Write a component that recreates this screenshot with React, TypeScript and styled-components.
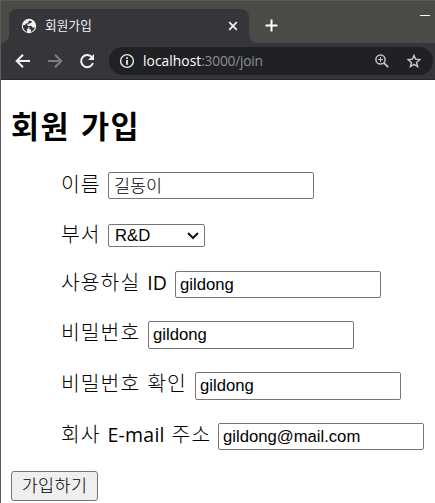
import React from 'react';
import styled, { createGlobalStyle } from 'styled-components';

const GlobalStyle = createGlobalStyle`
  * { box-sizing: border-box; }
  html, body { margin: 0; padding: 0; overflow: hidden; background: #fff; }
`;

const korean = '"Noto Sans CJK KR", sans-serif';

const Window = styled.div`
  width: 435px;
  height: 503px;
  border-left: 1px solid #5b5b5b;
  background: #fff;
  overflow: hidden;
`;

const TitleBar = styled.header`
  display: flex;
  height: 43px;
  border-top: 1px solid #5b5a58;
  background: #4b4a47;
`;

const TabShoulder = styled.div<{ $side: 'left' | 'right' }>`
  flex: none;
  align-self: flex-end;
  width: 8px;
  height: 8px;
  background: radial-gradient(circle at ${p => (p.$side === 'left' ? '0 0' : '100% 0')}, transparent 7.5px, #35363a 8px);
`;

const Tab = styled.div`
  display: flex;
  align-items: center;
  width: 240px;
  height: 34px;
  margin-top: 8px;
  padding: 0 11px 0 12px;
  border-radius: 8px 8px 0 0;
  background: #35363a;
`;

const TabTitle = styled.span`
  flex: 1;
  margin: -2px 0 0 8px;
  color: #f1f3f4;
  font: 12.6px/18px ${korean};
  letter-spacing: 0.2px;
  white-space: nowrap;
`;

const NewTab = styled.div`
  display: flex;
  padding: 18px 0 0 8px;
`;

const Minimize = styled.div`
  width: 10px;
  height: 1px;
  margin: 14px 5px 0 auto;
  background: #fff;
`;

const Toolbar = styled.nav`
  display: flex;
  align-items: center;
  height: 37px;
  padding: 0 2px 1px 14px;
  border-bottom: 1px solid #27282b;
  background: #35363a;
`;

const NavIcons = styled.div`
  display: flex;
  gap: 16px;
  width: 94px;
`;

const AddressBar = styled.div`
  display: flex;
  align-items: center;
  flex: 1;
  height: 28px;
  padding: 0 12px 0 10px;
  border-radius: 14px;
  background: #202124;
`;

const Url = styled.span`
  flex: 1;
  margin-left: 8px;
  color: #8b8e92;
  font: 13.8px/20px "Open Sans", sans-serif;
  letter-spacing: -0.25px;
  white-space: nowrap;
`;

const Host = styled.span`
  color: #fff;
  letter-spacing: 0.05px;
`;

const AddressActions = styled.div`
  display: flex;
  gap: 18px;
`;

const Page = styled.form`
  padding: 29px 0 0 10px;
`;

const Heading = styled.h1`
  margin: 0;
  height: 33px;
  color: #000;
  font: 700 30.5px/33px ${korean};
  letter-spacing: 1.5px;
  word-spacing: 2.5px;
  white-space: nowrap;
`;

const Fields = styled.div`
  display: flex;
  flex-direction: column;
  padding: 30px 0 0 50px;
`;

const Field = styled.label<{ $height: number; $gap: number }>`
  display: flex;
  height: ${p => p.$height}px;
  margin-bottom: ${p => p.$gap}px;
`;

const Label = styled.span<{ $width: number; $line?: number }>`
  flex: none;
  width: ${p => p.$width}px;
  color: #000;
  font: 300 20.4px/${p => p.$line ?? 21}px ${korean};
  letter-spacing: 1.05px;
  word-spacing: 1.4px;
  white-space: nowrap;
`;

const Latin = styled.span`
  font-family: "Open Sans", sans-serif;
  font-size: 19.5px;
  font-weight: 400;
  line-height: 1;
  letter-spacing: 0.2px;
`;

const Input = styled.input`
  width: 206px;
  height: 100%;
  margin: 0;
  padding: 1px 4px;
  border: 1px solid #767676;
  border-radius: 2px;
  outline: 0;
  background: #fff;
  color: #000;
  font: 16.67px "Liberation Sans", ${korean};
`;

const NameInput = styled(Input)`
  padding: 0 5px 2px;
  font: 300 17.4px ${korean};
`;

const SelectBox = styled.div`
  display: flex;
  align-items: center;
  justify-content: space-between;
  width: 97px;
  height: 23px;
  padding: 0 5px 0 6px;
  border: 1px solid #767676;
  border-radius: 2px;
  color: #000;
  font: 16.67px/21px "Liberation Sans", sans-serif;
`;

const Submit = styled.button`
  display: block;
  width: 87px;
  height: 30px;
  padding: 0 0 3px;
  border: 1px solid #767676;
  border-radius: 3px;
  background: #efefef;
  color: #000;
  font: 300 17.4px/24px ${korean};
  letter-spacing: 0.4px;
  white-space: nowrap;
`;

const Globe = () => (
  <svg width="16" height="16" viewBox="0 0 16 16">
    <circle cx="8" cy="8" r="7.2" fill="#f1f3f4" />
    <path d="M2 7h2.8l2.4 1.2.6 1.9-1.7.8v2.9C3.7 13 1.7 10.6 2 7ZM8.2 2.4l2.9 1-.9 1.6H8.5l-.3 1.2H6.4l-.3 1 1.2.8 3-.2 1 1.7h2.5c-.5 2.4-1.9 3.7-4 4.4l.2-2.2-1.7-.8.2-1.6-2.4-1.5-1.9-.1.2-2 2.4-.4Z" fill="#35363a" />
  </svg>
);

const Arrow = ({ forward = false }: { forward?: boolean }) => (
  <svg width="16" height="16" viewBox="0 0 16 16" fill="none" stroke={forward ? '#7c7d80' : '#f1f3f4'} strokeWidth="2">
    {forward ? <path d="M1 8h13M8 1.7 14.3 8 8 14.3" /> : <path d="M15 8H2M8 1.7 1.7 8 8 14.3" />}
  </svg>
);

const Reload = () => (
  <svg width="16" height="16" viewBox="0 0 16 16">
    <path d="M13 4.2A6.1 6.1 0 1 0 14 10" fill="none" stroke="#f1f3f4" strokeWidth="2" />
    <path d="M15 1v6H9Z" fill="#f1f3f4" />
  </svg>
);

const Info = () => (
  <svg width="16" height="16" viewBox="0 0 16 16">
    <circle cx="8" cy="8" r="6.4" fill="none" stroke="#e8eaed" strokeWidth="1.4" />
    <path d="M7.1 4.2h1.8V6H7.1zM7.1 7.1h1.8v4.7H7.1z" fill="#e8eaed" />
  </svg>
);

const Magnifier = () => (
  <svg width="14" height="14" viewBox="0 0 14 14" fill="none" stroke="#bfc1c4">
    <circle cx="5.5" cy="5.5" r="4.6" strokeWidth="1.5" />
    <path d="m9 9 4.2 4.2" strokeWidth="1.8" />
    <path d="M5.5 3v5M3 5.5h5" strokeWidth="1.1" />
  </svg>
);

const Star = () => (
  <svg width="14" height="14" viewBox="0 0 14 14">
    <path d="m7 1.4 1.6 3.8 4.2.4-3.2 2.8 1 4.1L7 10.3l-3.6 2.2 1-4.1-3.2-2.8 4.2-.4Z" fill="none" stroke="#c8cacd" strokeWidth="1.4" />
  </svg>
);

export default function App() {
  return (
    <>
      <GlobalStyle />
      <Window>
        <TitleBar>
          <TabShoulder $side="left" />
          <Tab>
            <Globe />
            <TabTitle>회원가입</TabTitle>
            <svg width="10" height="10" viewBox="0 0 10 10">
              <path d="m1.2 1.2 7.6 7.6m0-7.6L1.2 8.8" stroke="#f1f3f4" strokeWidth="1.7" />
            </svg>
          </Tab>
          <TabShoulder $side="right" />
          <NewTab>
            <svg width="13" height="13" viewBox="0 0 13 13">
              <path d="M6.5.5v12M.5 6.5h12" stroke="#fff" strokeWidth="2" />
            </svg>
          </NewTab>
          <Minimize />
        </TitleBar>
        <Toolbar>
          <NavIcons>
            <Arrow />
            <Arrow forward />
            <Reload />
          </NavIcons>
          <AddressBar>
            <Info />
            <Url><Host>localhost</Host>:3000/join</Url>
            <AddressActions>
              <Magnifier />
              <Star />
            </AddressActions>
          </AddressBar>
        </Toolbar>
        <Page>
          <Heading>회원 가입</Heading>
          <Fields>
            <Field $height={27} $gap={25}>
              <Label $width={47} $line={23}>이름</Label>
              <NameInput defaultValue="길동이" />
            </Field>
            <Field $height={23} $gap={24}>
              <Label $width={47} $line={18}>부서</Label>
              <SelectBox>
                R&amp;D
                <svg width="12" height="8" viewBox="0 0 12 8">
                  <path d="m1 1 5 5 5-5" fill="none" stroke="#111" strokeWidth="2" />
                </svg>
              </SelectBox>
            </Field>
            <Field $height={27} $gap={23}>
              <Label $width={114}>사용하실 <Latin>ID</Latin></Label>
              <Input defaultValue="gildong" />
            </Field>
            <Field $height={28} $gap={23}>
              <Label $width={87}>비밀번호</Label>
              <Input defaultValue="gildong" />
            </Field>
            <Field $height={28} $gap={23}>
              <Label $width={134}>비밀번호 확인</Label>
              <Input defaultValue="gildong" />
            </Field>
            <Field $height={27} $gap={21}>
              <Label $width={157}>회사 <Latin>E-mail</Latin> 주소</Label>
              <Input defaultValue="gildong@mail.com" />
            </Field>
          </Fields>
          <Submit type="button">가입하기</Submit>
        </Page>
      </Window>
    </>
  );
}
